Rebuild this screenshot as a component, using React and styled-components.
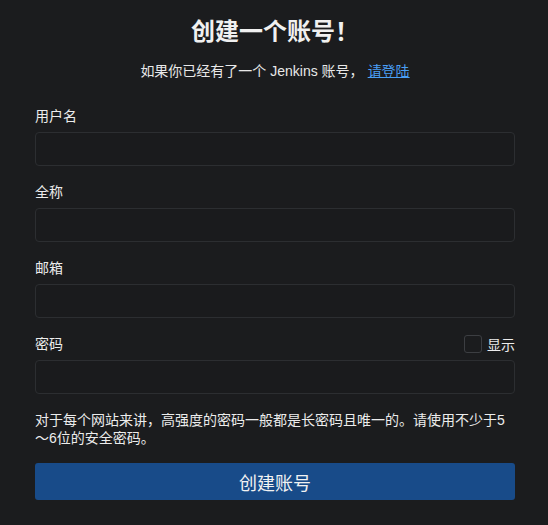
import styled, { createGlobalStyle } from "styled-components";

const GlobalStyle = createGlobalStyle`
  html, body {
    margin: 0;
    padding: 0;
    background: #1b1c1e;
  }
  body {
    font-family: "Liberation Sans", Arial, "Noto Sans CJK SC", sans-serif;
    color: #e8e8e8;
  }
`;

const Page = styled.div`
  width: 548px;
  height: 525px;
  background: #1b1c1e;
  padding: 16px 33px 0 35px;
  box-sizing: border-box;
`;

const Title = styled.h1`
  margin: 0;
  text-align: center;
  font-size: 24px;
  line-height: 32px;
  font-weight: bold;
  color: #f0f0f0;
`;

const Subtitle = styled.p`
  margin: 13px 0 0;
  text-align: center;
  font-size: 14px;
  line-height: 20px;
  color: #e8e8e8;

  a {
    color: #4a9ff5;
    text-decoration: underline;
    margin-left: 4px;
  }
`;

const Form = styled.form`
  display: flex;
  flex-direction: column;
  margin-top: 25px;
`;

const Field = styled.div`
  display: flex;
  flex-direction: column;
  margin-bottom: 16px;
`;

const LabelRow = styled.div`
  display: flex;
  justify-content: space-between;
  align-items: center;
  height: 20px;
  margin-bottom: 6px;
`;

const Label = styled.label`
  font-size: 14px;
  line-height: 20px;
  color: #ececec;
`;

const Toggle = styled.label`
  display: flex;
  align-items: center;
  gap: 5px;
  font-size: 14px;
  color: #ececec;
`;

const Box = styled.span`
  width: 18px;
  height: 18px;
  box-sizing: border-box;
  border: 1px solid #3c3e42;
  border-radius: 3px;
  background: #1b1c1e;
`;

const Input = styled.input`
  height: 34px;
  box-sizing: border-box;
  border: 1px solid #2c2e31;
  border-radius: 4px;
  background: #1a1b1d;
  color: #e8e8e8;
  padding: 0 10px;
  font-size: 14px;
  outline: none;
`;

const Hint = styled.p`
  margin: 1px 0 0;
  font-size: 14px;
  line-height: 18px;
  color: #ececec;
`;

const Submit = styled.button`
  margin-top: 16px;
  height: 37px;
  border: none;
  border-radius: 3px;
  background: #184b89;
  color: #f2f2f2;
  font-family: inherit;
  font-size: 18px;
  cursor: pointer;
`;

export default function App() {
  return (
    <Page>
      <GlobalStyle />
      <Title>创建一个账号！</Title>
      <Subtitle>
        如果你已经有了一个 Jenkins 账号，<a href="#">请登陆</a>
      </Subtitle>
      <Form onSubmit={(e) => e.preventDefault()}>
        <Field>
          <LabelRow>
            <Label>用户名</Label>
          </LabelRow>
          <Input type="text" />
        </Field>
        <Field>
          <LabelRow>
            <Label>全称</Label>
          </LabelRow>
          <Input type="text" />
        </Field>
        <Field>
          <LabelRow>
            <Label>邮箱</Label>
          </LabelRow>
          <Input type="email" />
        </Field>
        <Field>
          <LabelRow>
            <Label>密码</Label>
            <Toggle>
              <Box />
              显示
            </Toggle>
          </LabelRow>
          <Input type="password" />
        </Field>
        <Hint>
          对于每个网站来讲，高强度的密码一般都是长密码且唯一的。请使用不少于5 ～6位的安全密码。
        </Hint>
        <Submit type="submit">创建账号</Submit>
      </Form>
    </Page>
  );
}
